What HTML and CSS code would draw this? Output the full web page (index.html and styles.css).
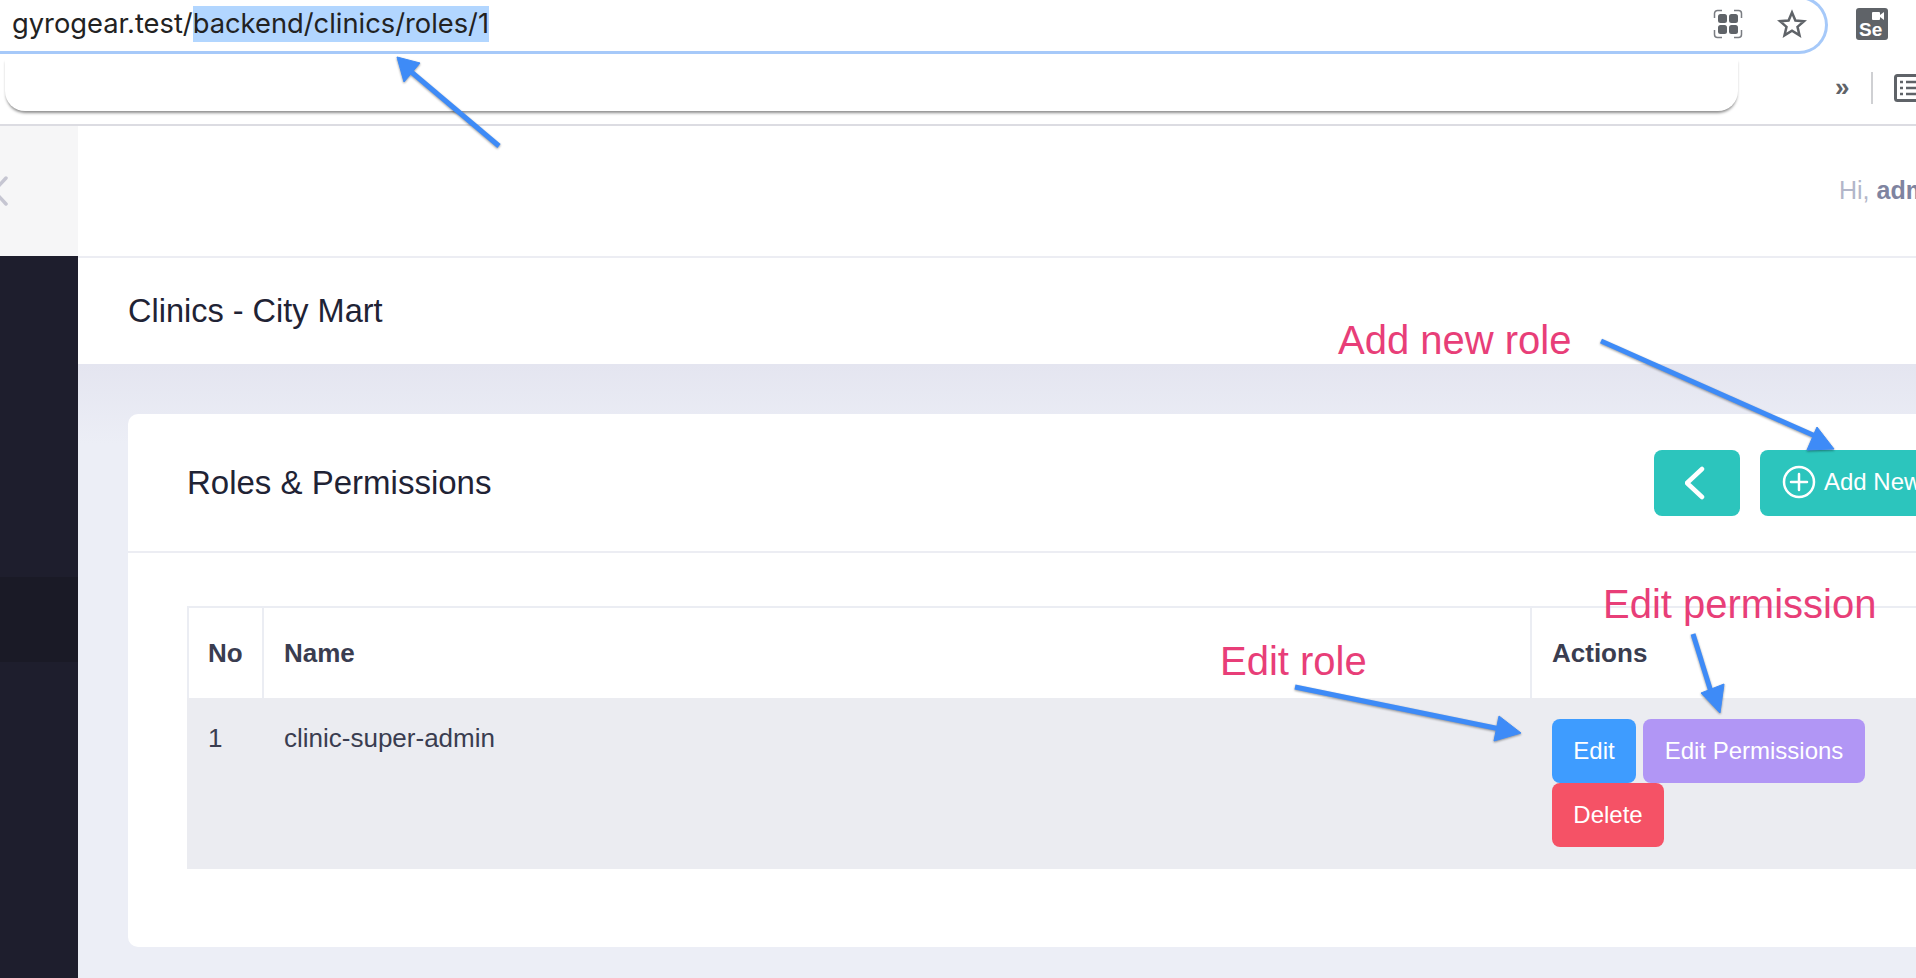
FILE: index.html
```html
<!DOCTYPE html>
<html lang="en">
<head>
<meta charset="utf-8">
<title>Roles &amp; Permissions</title>
<link rel="stylesheet" href="styles.css">
</head>
<body>
<div class="page">
  <div class="chrome">
    <div class="chrome-top">
      <div class="omnibox">
        <div class="url">gyrogear.test/<span class="url-sel">backend/clinics/roles/1</span></div>
        <svg class="ic-qr" viewBox="0 0 30 30" width="30" height="30"><path d="M1.500 9V4.500a3 3 0 0 1 3-3H9M21 1.500h4.500a3 3 0 0 1 3 3V9M28.500 21v4.500a3 3 0 0 1-3 3H21M9 28.500H4.500a3 3 0 0 1-3-3V21" fill="none" stroke="#7a7d82" stroke-width="1.500"/><rect x="5" y="5" width="9" height="9" rx="2.500" fill="#5f6368"/><rect x="16" y="5" width="9" height="9" rx="2.500" fill="#5f6368"/><rect x="5" y="16" width="9" height="9" rx="2.500" fill="#5f6368"/><rect x="16" y="16" width="9" height="9" rx="2.500" fill="#5f6368"/></svg>
        <svg class="ic-star" viewBox="0 0 30 30" width="30" height="30"><path d="M15 3.500l3.400 8 8.600.7-6.500 5.700 2 8.400L15 21.800l-7.500 4.500 2-8.400L3 12.200l8.600-.7z" fill="none" stroke="#5f6368" stroke-width="2.500" stroke-linejoin="miter"/></svg>
      </div>
      <div class="ext-se">
        <svg class="ic-cam" viewBox="0 0 12 8" width="12" height="8"><rect x="0" y="0" width="8" height="8" rx="1" fill="#fff"/><path d="M8 3l4-3v8L8 5z" fill="#fff"/></svg>
        <span class="se-text">Se</span>
      </div>
    </div>
    <div class="bookmarks">
      <div class="bm-box"></div>
      <span class="bm-more">»</span>
      <span class="bm-divider"></span>
      <svg class="ic-list" viewBox="0 0 30 28" width="30" height="28"><rect x="1.500" y="1.500" width="40" height="25" rx="2" fill="none" stroke="#5f6368" stroke-width="3"/><path d="M6 8h3M12 8h18M6 14h3M12 14h18M6 20h3M12 20h18" stroke="#5f6368" stroke-width="2.500"/></svg>
    </div>
  </div>

  <div class="app">
    <aside class="sidebar">
      <div class="brand">
        <svg class="ic-collapse" viewBox="0 0 8 30" width="8" height="30"><path d="M6 2L-6 15 6 28" fill="none" stroke="#c6c6d2" stroke-width="3.500" stroke-linecap="round"/></svg>
      </div>
      <nav class="nav"><div class="nav-active"></div></nav>
    </aside>
    <main class="main">
      <header class="topbar"><span class="greet">Hi, <b class="greet-name">admin</b></span></header>
      <div class="subheader"><h1 class="subheader-title">Clinics - City Mart</h1></div>
      <div class="content">
        <section class="card">
          <div class="card-head">
            <h2 class="card-title">Roles &amp; Permissions</h2>
            <div class="card-tools">
              <button class="btn btn-teal btn-back" type="button"><svg viewBox="0 0 24 36" width="24" height="36"><path d="M17 4L2 18l15 14" fill="none" stroke="#fff" stroke-width="4.500" stroke-linecap="round" stroke-linejoin="round"/></svg></button>
              <button class="btn btn-teal btn-add" type="button"><svg viewBox="0 0 34 34" width="34" height="34"><circle cx="17" cy="17" r="15" fill="none" stroke="#fff" stroke-width="2.500"/><path d="M17 9v16M9 17h16" stroke="#fff" stroke-width="2.500" stroke-linecap="round"/></svg><span class="btn-add-text">Add New</span></button>
            </div>
          </div>
          <div class="card-body">
            <table class="table">
              <thead>
                <tr><th class="col-no">No</th><th class="col-name">Name</th><th class="col-actions">Actions</th></tr>
              </thead>
              <tbody>
                <tr>
                  <td>1</td>
                  <td class="cell-name">clinic-super-admin</td>
                  <td class="cell-actions">
                    <div class="actions">
                      <button class="btn btn-edit" type="button">Edit</button>
                      <button class="btn btn-perm" type="button">Edit Permissions</button>
                      <button class="btn btn-del" type="button">Delete</button>
                    </div>
                  </td>
                </tr>
              </tbody>
            </table>
          </div>
        </section>
      </div>
    </main>
  </div>

  <span class="note note-add">Add new role</span>
  <span class="note note-role">Edit role</span>
  <span class="note note-perm">Edit permission</span>
  <svg class="arrows" viewBox="0 0 1916 978" width="1916" height="978">
    <g fill="#3e8bf7" stroke="#3e8bf7">
      <path d="M499 146L409 70" fill="none" stroke-width="5"/>
      <path d="M397 57L420 63 404 82z" stroke-width="1"/>
      <path d="M1601 341L1822 439" fill="none" stroke-width="5"/>
      <path d="M1817 427L1807 450 1834 449z" stroke-width="1"/>
      <path d="M1295 687L1505 730" fill="none" stroke-width="5"/>
      <path d="M1521 733L1499 716 1494 741z" stroke-width="1"/>
      <path d="M1693 634L1712 695" fill="none" stroke-width="5"/>
      <path d="M1720 713L1701 693 1724 684z" stroke-width="1"/>
    </g>
  </svg>
</div>
</body>
</html>
```
FILE: styles.css
```css
* { box-sizing: border-box; }
html, body { margin: 0; padding: 0; background: #fff; }
body { font-family: "Liberation Sans", Arial, sans-serif; color: #3a3d50; }
.page { position: relative; width: 1916px; height: 978px; overflow: hidden; display: flex; flex-direction: column; }

.chrome { flex: none; height: 126px; background: #fff; border-bottom: 2px solid #dcdce2; }
.chrome-top { display: flex; align-items: flex-start; height: 54px; }
.omnibox { flex: none; width: 1828px; height: 58px; margin-top: -4px; border: 3px solid #a6c9f9; border-left: 0; border-radius: 0 29px 29px 0; display: flex; align-items: center; padding: 0 0 2px 12px; }
.url { font-family: Inter, "Liberation Sans", sans-serif; font-size: 27.3px; line-height: 36px; color: #222; flex: 1; white-space: nowrap; }
.url-sel { display: inline-block; background: #b2d6ff; line-height: 36px; }
.ic-qr { margin-right: 34px; }
.ic-star { margin-right: 18px; }
.ext-se { flex: none; position: relative; width: 32px; height: 32px; margin: 8px 0 0 28px; background: #5f6368; border-radius: 3px; overflow: hidden; }
.ic-cam { position: absolute; top: 4px; right: 4px; }
.se-text { position: absolute; left: 3px; bottom: 0; font-size: 19px; line-height: 20px; font-weight: 700; color: #fff; }

.bookmarks { display: flex; align-items: flex-start; height: 70px; }
.bm-box { flex: none; width: 1733px; height: 53px; margin: 4px 0 0 5px; background: #fff; border-radius: 0 0 20px 20px; box-shadow: 0 3px 3px -1px rgba(0, 0, 0, .45); }
.bm-more { flex: none; width: 14px; margin: 18px 0 0 97px; font-size: 26px; line-height: 30px; font-weight: 700; color: #5f6368; }
.bm-divider { flex: none; width: 2px; height: 32px; margin: 18px 0 0 22px; background: #cfd0d3; }
.ic-list { margin: 20px 0 0 21px; flex: none; }

.app { flex: 1; display: flex; min-height: 0; }
.sidebar { flex: none; width: 78px; display: flex; flex-direction: column; }
.brand { flex: none; height: 130px; background: #f6f6f7; display: flex; align-items: center; }
.nav { flex: 1; background: #1e1e2d; padding-top: 321px; }
.nav-active { height: 85px; background: #1a1a26; }

.main { flex: 1; min-width: 0; display: flex; flex-direction: column; background: #e8e9f3; }
.topbar { flex: none; height: 132px; background: #fff; border-bottom: 2px solid #ecedf3; padding: 48px 0 0 1761px; white-space: nowrap; }
.greet { font-size: 25px; line-height: 32px; color: #b2b6c9; }
.greet-name { color: #7f84a0; }
.subheader { flex: none; height: 106px; background: #fff; padding-left: 50px; display: flex; align-items: center; }
.subheader-title { margin: 0; font-size: 32.5px; font-weight: 400; color: #1f2335; }

.content { flex: 1; padding: 50px 0 0 50px; background: linear-gradient(#e4e5f0, #eceef6 80px); }
.card { width: 1890px; height: 533px; background: #fff; border-radius: 10px 0 0 10px; }
.card-head { height: 139px; padding: 36px 59px 0; border-bottom: 2px solid #ecedf3; display: flex; justify-content: space-between; }
.card-title { margin: 0; font-size: 33px; line-height: 66px; font-weight: 400; color: #1f2335; }
.card-tools { display: flex; gap: 20px; }
.card-body { padding: 53px 59px 0; }

.btn { border: 0; border-radius: 8px; color: #fff; font-family: inherit; font-size: 24px; white-space: nowrap; display: inline-flex; align-items: center; justify-content: center; padding: 0; height: 64px; }
.btn-teal { background: #2cc5bd; height: 66px; }
.btn-back { width: 86px; padding: 0; }
.btn-add { width: 199px; gap: 8px; justify-content: flex-start; padding: 0 22px 2px; }
.btn-add-text { display: block; }

.table { width: 100%; border-collapse: separate; border-spacing: 0; table-layout: fixed; font-size: 26px; color: #3a3d50; }
.table th { height: 92px; padding: 0 19px; text-align: left; font-weight: 700; background: #fff; border-top: 2px solid #ebedf3; border-left: 2px solid #ebedf3; }
.table th:last-child { border-right: 2px solid #ebedf3; }
.table td { height: 171px; padding: 21px; vertical-align: top; background: #ebecf1; line-height: 36px; }
.table td:first-child, .table .cell-name { padding-top: 22px; }
.col-no { width: 75px; }
.table .col-name, .table .col-actions { padding-left: 20px; }
.table .cell-name, .table .cell-actions { padding-left: 22px; }
.col-actions { width: 429px; }
.actions { display: flex; flex-wrap: wrap; column-gap: 7px; }
.btn-edit { background: #3e9cff; width: 84px; }
.btn-perm { background: #b196f5; width: 222px; }
.btn-del { background: #f55266; width: 112px; }

.note { position: absolute; font-size: 40px; line-height: 46px; color: #e83e78; white-space: nowrap; }
.note-add { left: 1338px; top: 317px; }
.note-role { left: 1220px; top: 638px; }
.note-perm { left: 1603px; top: 581px; }
.arrows { position: absolute; left: 0; top: 0; pointer-events: none; filter: drop-shadow(0 1px 1px rgba(0, 0, 0, .4)); }
```
